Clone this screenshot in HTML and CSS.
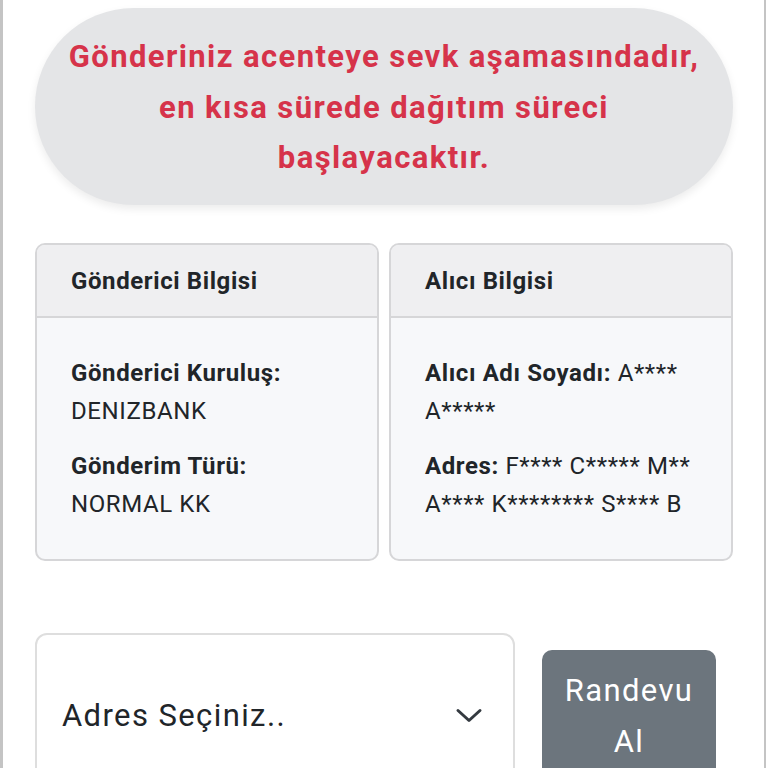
FILE: index.html
```html
<!DOCTYPE html>
<html lang="tr">
<head>
<meta charset="utf-8">
<title>Gönderi Durumu</title>
<link rel="stylesheet" href="styles.css">
</head>
<body>
<div class="page">
  <div class="status-banner">Gönderiniz acenteye sevk aşamasındadır,<br>en kısa sürede dağıtım süreci<br>başlayacaktır.</div>

  <div class="info-grid">
    <section class="info-card">
      <header class="info-card__head">Gönderici Bilgisi</header>
      <div class="info-card__body">
        <p class="info-item"><strong>Gönderici Kuruluş:</strong><br>DENIZBANK</p>
        <p class="info-item"><strong>Gönderim Türü:</strong><br>NORMAL KK</p>
      </div>
    </section>
    <section class="info-card">
      <header class="info-card__head">Alıcı Bilgisi</header>
      <div class="info-card__body">
        <p class="info-item"><strong>Alıcı Adı Soyadı:</strong> A**** A*****</p>
        <p class="info-item"><strong>Adres:</strong> F**** C***** M** A**** K******** S**** B</p>
      </div>
    </section>
  </div>

  <div class="action-row">
    <div class="address-select">
      <span class="address-select__text">Adres Seçiniz..</span>
      <svg class="address-select__chevron" width="28" height="16" viewBox="0 0 28 16"><path d="M3 2.5 L14 12.5 L25 2.5" fill="none" stroke="#343a40" stroke-width="3" stroke-linecap="round" stroke-linejoin="round"/></svg>
    </div>
    <button class="btn-appointment">Randevu Al</button>
  </div>
</div>
</body>
</html>
```

FILE: styles.css
```css
html, body {
  margin: 0;
  padding: 0;
  background: #ffffff;
}

body {
  font-family: Roboto, "Liberation Sans", Arial, sans-serif;
  color: #212529;
}

.page {
  box-sizing: border-box;
  width: 766px;
  min-height: 768px;
  border-left: 3px solid #c4c4c4;
  border-right: 2px solid #c4c4c4;
  padding: 8px 31px 0 32px;
}

.status-banner {
  background: #e4e5e7;
  border-radius: 100px;
  box-shadow: 0 4px 8px rgba(0, 0, 0, 0.08);
  padding: 24px 10px 21px;
  text-align: center;
  color: #d6334a;
  font-weight: 700;
  font-size: 31px;
  letter-spacing: 1.4px;
  line-height: 50.5px;
}

.info-grid {
  display: grid;
  grid-template-columns: 1fr 1fr;
  gap: 10px;
  margin-top: 38px;
}

.info-card {
  border: 2px solid #d6d6d8;
  border-radius: 10px;
  overflow: hidden;
  background: #f7f8fa;
  display: flex;
  flex-direction: column;
}

.info-card__head {
  background: #efeff1;
  border-bottom: 2px solid #d6d6d8;
  padding: 17px 20px 16px 34px;
  font-weight: 700;
  font-size: 24px;
  letter-spacing: 0.6px;
  line-height: 38px;
}

.info-card__body {
  padding: 36px 18px 36px 34px;
  flex: 1;
}

.info-item {
  margin: 0 0 17px;
  font-size: 24px;
  letter-spacing: 0.6px;
  line-height: 38px;
}

.info-item:last-child {
  margin-bottom: 0;
}

.info-item strong {
  font-weight: 700;
}

.action-row {
  display: flex;
  align-items: center;
  margin-top: 72px;
}

.address-select {
  box-sizing: border-box;
  width: 480px;
  height: 166px;
  border: 2px solid #dedede;
  border-radius: 12px;
  background: #fff;
  display: flex;
  align-items: center;
  justify-content: space-between;
  padding: 0 30px 0 25px;
  font-size: 31px;
  letter-spacing: 1.4px;
  color: #212529;
}

.address-select__chevron {
  display: block;
}

.btn-appointment {
  box-sizing: border-box;
  width: 174px;
  margin-left: 27px;
  border: 0;
  border-radius: 10px;
  background: #6c757d;
  color: #fff;
  font-family: inherit;
  font-size: 31px;
  letter-spacing: 1.4px;
  line-height: 51px;
  padding: 15px 14px;
  text-align: center;
}
```
